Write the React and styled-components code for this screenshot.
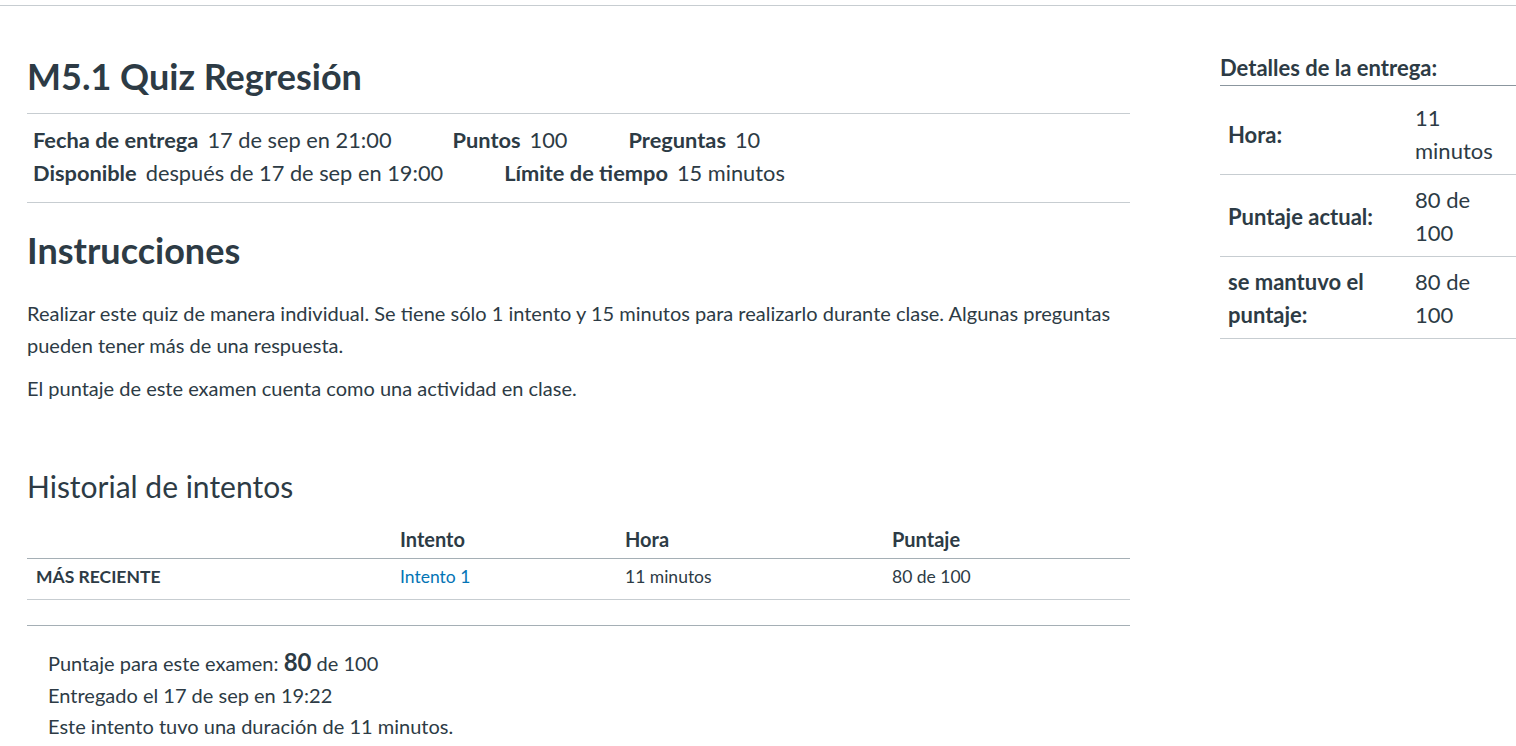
import React from 'react'
import styled, { createGlobalStyle } from 'styled-components'

const GlobalStyle = createGlobalStyle`
  body {
    margin: 0;
    font-family: Lato, "Open Sans", sans-serif;
    color: #2d3b45;
    background: #fff;
  }
`

const TopRule = styled.div`
  height: 5px;
  border-bottom: 1px solid #c7cdd1;
`

const Page = styled.div`
  display: flex;
  gap: 90px;
  padding-left: 27px;
`

const Main = styled.main`
  width: 1103px;
  flex: none;
`

const Title = styled.h1`
  margin: 0;
  padding: 49px 0 15px;
  font-size: 36px;
  font-weight: 700;
  line-height: 1.2;
  border-bottom: 1px solid #c7cdd1;
`

const Details = styled.ul`
  list-style: none;
  margin: 0;
  padding: 9px 6px 13px;
  border-bottom: 1px solid #c7cdd1;
`

const DetailRow = styled.li`
  display: flex;
  gap: 61px;
  font-size: 21.8px;
  line-height: 33px;
`

const Detail = styled.span`
  b {
    font-weight: 700;
    margin-right: 9px;
  }
`

const SectionTitle = styled.h2`
  margin: 26px 0 25px;
  font-size: 36px;
  font-weight: 700;
  line-height: 1.2;
`

const Para = styled.p`
  margin: 0 0 11px;
  font-size: 20px;
  line-height: 32px;
`

const HistoryTitle = styled.h3`
  margin: 64px 0 14px;
  font-size: 30px;
  font-weight: 400;
  line-height: 36px;
`

const Table = styled.table`
  width: 100%;
  border-collapse: collapse;
  margin-bottom: 25px;
`

const Th = styled.th`
  text-align: left;
  font-size: 20px;
  font-weight: 700;
  line-height: 24px;
  padding: 9px 0 7px;
  border-bottom: 1px solid #a5afb5;
  width: ${p => p.$w || 'auto'};
`

const Td = styled.td`
  font-size: 17.5px;
  line-height: 21px;
  padding: 7px 0 12px;
  border-bottom: 1px solid #c7cdd1;
  padding-left: ${p => (p.$head ? '9px' : '0')};
  font-weight: ${p => (p.$head ? 700 : 400)};
`

const Link = styled.a`
  color: #0374b5;
  text-decoration: none;
`

const Summary = styled.div`
  border-top: 1px solid #a5afb5;
  padding: 20px 21px 0;
  font-size: 20px;
  line-height: 31.5px;

  strong {
    font-size: 24px;
    font-weight: 700;
  }
`

const Aside = styled.aside`
  flex: none;
  width: 296px;
  padding-top: 44px;
`

const AsideTitle = styled.h4`
  margin: 0;
  font-size: 22px;
  font-weight: 700;
  line-height: 35px;
  border-bottom: 1px solid #8b969e;
`

const SideTable = styled.table`
  width: 100%;
  border-collapse: collapse;
  font-size: 22px;
  line-height: 33px;

  td, th {
    padding: 8px 8px 7px;
    border-bottom: 1px solid #c7cdd1;
    text-align: left;
    vertical-align: middle;
  }
  tr:first-child td, tr:first-child th {
    padding-top: 15px;
  }
  th {
    font-weight: 700;
    width: 171px;
  }
`

export default function App() {
  return (
    <>
      <GlobalStyle />
      <TopRule />
      <Page>
        <Main>
          <Title>M5.1 Quiz Regresión</Title>
          <Details>
            <DetailRow>
              <Detail><b>Fecha de entrega</b>17 de sep en 21:00</Detail>
              <Detail><b>Puntos</b>100</Detail>
              <Detail><b>Preguntas</b>10</Detail>
            </DetailRow>
            <DetailRow>
              <Detail><b>Disponible</b>después de 17 de sep en 19:00</Detail>
              <Detail><b>Límite de tiempo</b>15 minutos</Detail>
            </DetailRow>
          </Details>

          <SectionTitle>Instrucciones</SectionTitle>
          <Para>
            Realizar este quiz de manera individual. Se tiene sólo 1 intento y 15 minutos para realizarlo durante clase. Algunas preguntas pueden tener más de una respuesta.
          </Para>
          <Para>El puntaje de este examen cuenta como una actividad en clase.</Para>

          <HistoryTitle>Historial de intentos</HistoryTitle>
          <Table>
            <thead>
              <tr>
                <Th $w="373px"></Th>
                <Th $w="225px">Intento</Th>
                <Th $w="267px">Hora</Th>
                <Th>Puntaje</Th>
              </tr>
            </thead>
            <tbody>
              <tr>
                <Td $head>MÁS RECIENTE</Td>
                <Td><Link href="#">Intento 1</Link></Td>
                <Td>11 minutos</Td>
                <Td>80 de 100</Td>
              </tr>
            </tbody>
          </Table>

          <Summary>
            <div>Puntaje para este examen: <strong>80</strong> de 100</div>
            <div>Entregado el 17 de sep en 19:22</div>
            <div>Este intento tuvo una duración de 11 minutos.</div>
          </Summary>
        </Main>

        <Aside>
          <AsideTitle>Detalles de la entrega:</AsideTitle>
          <SideTable>
            <tbody>
              <tr><th>Hora:</th><td>11<br />minutos</td></tr>
              <tr><th>Puntaje actual:</th><td>80 de<br />100</td></tr>
              <tr><th>se mantuvo el<br />puntaje:</th><td>80 de<br />100</td></tr>
            </tbody>
          </SideTable>
        </Aside>
      </Page>
    </>
  )
}
